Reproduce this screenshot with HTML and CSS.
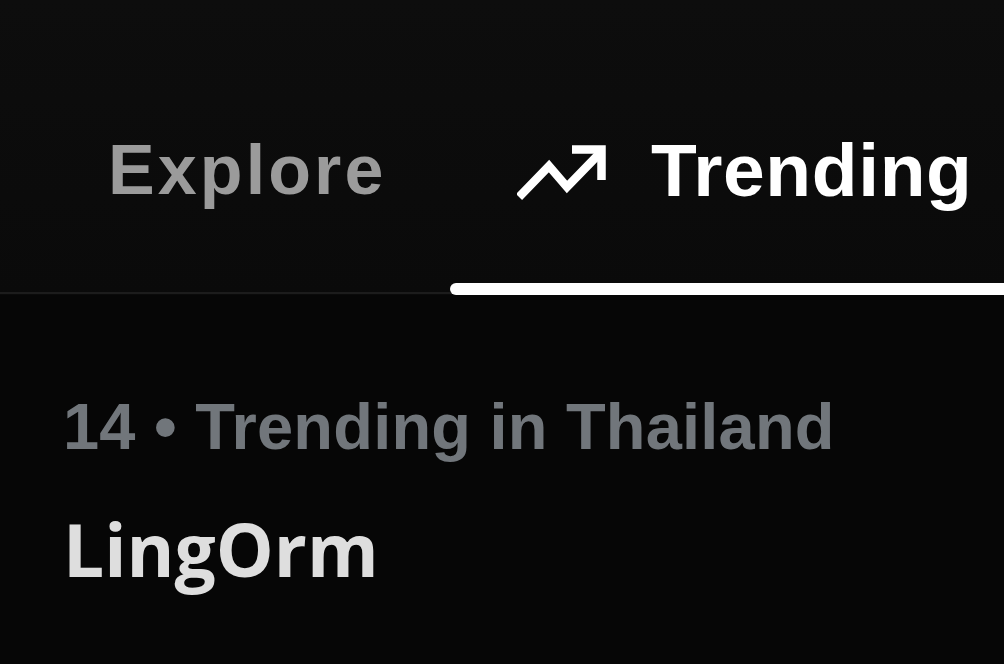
FILE: index.html
```html
<!DOCTYPE html>
<html lang="en">
<head>
<meta charset="utf-8">
<title>Trending</title>
<link rel="stylesheet" href="styles.css">
</head>
<body>
<div class="page">
  <header class="tabs">
    <div class="tab tab-explore">Explore</div>
    <div class="tab tab-trending active">
      <svg class="trend-icon" viewBox="0 0 90 58" width="90" height="58" aria-hidden="true">
        <polyline points="2,52 32,21 50,42 82,9" fill="none" stroke="#fff" stroke-width="8.5" stroke-linejoin="miter" stroke-linecap="butt"/>
        <polyline points="55,4.5 84.5,4.5 84.5,35" fill="none" stroke="#fff" stroke-width="8.5" stroke-linejoin="miter"/>
      </svg>
      <span class="tab-label">Trending</span>
    </div>
  </header>
  <section class="trend">
    <div class="trend-meta">14 • Trending in Thailand</div>
    <div class="trend-name">LingOrm</div>
  </section>
</div>
</body>
</html>
```

FILE: styles.css
```css
html, body {
  margin: 0;
  padding: 0;
  background: #060606;
  overflow: hidden;
}

.page {
  width: 1004px;
  height: 664px;
  background: #060606;
  overflow: hidden;
}

.tabs {
  display: flex;
  height: 295px;
  background: linear-gradient(#0d0d0d, #0a0a0a);
  position: relative;
  box-sizing: border-box;
}

.tabs::after {
  content: "";
  position: absolute;
  left: 0;
  right: 0;
  bottom: 1px;
  height: 2px;
  background: #1c1c1c;
}

.tab {
  display: flex;
  align-items: flex-start;
  box-sizing: border-box;
  font-family: "Liberation Sans", Arial, sans-serif;
  font-weight: 700;
  line-height: 1;
}

.tab-explore {
  width: 450px;
  padding: 135px 0 0 108px;
  font-size: 70px;
  color: #9b9b9b;
  letter-spacing: 3.1px;
}

.tab-trending {
  flex: 1;
  position: relative;
  padding: 133px 0 0 67px;
  color: #ffffff;
  gap: 44px;
  white-space: nowrap;
}

.tab-trending .tab-label {
  font-size: 75px;
  letter-spacing: 0.6px;
}

.trend-icon {
  display: block;
  margin-top: 12px;
  flex: none;
}

.tab-trending.active::after {
  content: "";
  position: absolute;
  left: 0;
  right: -20px;
  bottom: 0;
  height: 12px;
  background: #ffffff;
  border-radius: 6px;
  z-index: 1;
}

.trend {
  padding: 99px 0 0 63px;
}

.trend-meta {
  font-family: "Liberation Sans", Arial, sans-serif;
  font-weight: 700;
  font-size: 65px;
  line-height: 1;
  color: #71767b;
  letter-spacing: 0.2px;
}

.trend-name {
  margin-top: 53px;
  font-family: "Open Sans", "Liberation Sans", sans-serif;
  font-weight: 700;
  font-size: 73px;
  line-height: 1;
  color: #dedede;
  letter-spacing: 0;
}
```
